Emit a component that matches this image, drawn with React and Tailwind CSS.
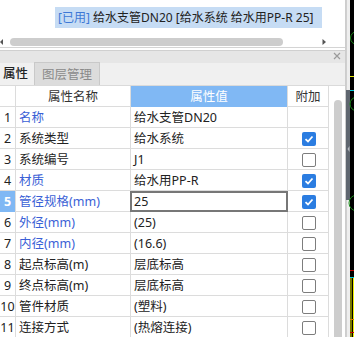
import React from "react";

const rows = [
    { n: 1, name: "名称", value: "给水支管DN20", blue: true, check: null },
    { n: 2, name: "系统类型", value: "给水系统", check: true },
    { n: 3, name: "系统编号", value: "J1", check: false },
    { n: 4, name: "材质", value: "给水用PP-R", blue: true, check: true },
    { n: 5, name: "管径规格(mm)", value: "25", blue: true, check: true, selected: true },
    { n: 6, name: "外径(mm)", value: "(25)", blue: true, check: false },
    { n: 7, name: "内径(mm)", value: "(16.6)", blue: true, check: false },
    { n: 8, name: "起点标高(m)", value: "层底标高", check: false },
    { n: 9, name: "终点标高(m)", value: "层底标高", check: false },
    { n: 10, name: "管件材质", value: "(塑料)", check: false },
    { n: 11, name: "连接方式", value: "(热熔连接)", check: false },
];

function CheckBox({ checked }) {
    if (checked) {
        return (
            <div className="w-[14px] h-[14px] rounded-[2px] bg-[#2b7de1] flex items-center justify-center">
                <svg width="10" height="10" viewBox="0 0 10 10">
                    <path d="M1.5 5.2 L4 7.5 L8.5 2.5" fill="none" stroke="#fff" strokeWidth="1.8" />
                </svg>
            </div>
        );
    }
    return <div className="w-[14px] h-[14px] rounded-[2px] border border-[#7d7d7d] bg-white" />;
}

function CanvasStrip() {
    return (
        <svg width="8" height="337" className="shrink-0 block">
            <rect x="0" y="0" width="4" height="337" fill="#eeeeee" />
            <rect x="0" y="0" width="1" height="337" fill="#cfcfcf" />
            <rect x="0" y="90" width="4" height="110" fill="#5f666f" />
            <path d="M3.5 146 L1.5 149 L3.5 152 Z" fill="#b8bcc2" />
            <rect x="4" y="0" width="4" height="337" fill="#000" />
            <circle cx="11" cy="38" r="6.5" fill="none" stroke="#1a8a1a" strokeWidth="1" />
            <circle cx="11" cy="104" r="7" fill="none" stroke="#1a8a1a" strokeWidth="1" />
            <circle cx="11" cy="203" r="8" fill="none" stroke="#1a8a1a" strokeWidth="1" />
            <rect x="4" y="76" width="4" height="1" fill="#e8e800" />
            <rect x="4" y="90" width="4" height="1" fill="#00c8d8" />
            <rect x="4" y="270" width="4" height="1" fill="#c00000" />
            <rect x="4" y="277" width="4" height="1" fill="#00c8d8" />
            <rect x="4.5" y="278" width="1" height="59" fill="#f0f000" />
            <rect x="7" y="278" width="1" height="59" fill="#f0f000" />
            <rect x="4" y="319" width="4" height="1" fill="#d08000" />
            <rect x="4" y="332" width="4" height="1" fill="#c00000" />
        </svg>
    );
}

export default function App() {
    return (
        <div
            className="w-[354px] h-[337px] overflow-hidden flex bg-white text-[12.5px] text-[#333]"
            style={{ fontFamily: '"Noto Sans", "Noto Sans CJK SC", sans-serif' }}
        >
            <div className="w-[346px] shrink-0 flex flex-col border-r border-[#cdcdcd]">
                {/* top list panel */}
                <div className="h-[50px] border-b border-[#d4d4d4] flex flex-col">
                    <div className="pl-[55px] pt-[7px]">
                        <span className="inline-block h-[21px] leading-[21px] w-[267px] pl-[3px] bg-[#c6dcf4] whitespace-nowrap text-[12px] text-[#222]">
                            <span className="text-[#3d78d6]">[已用]</span> 给水支管DN20 [给水系统 给水用PP-R 25]
                        </span>
                    </div>
                    <div className="flex items-center h-[10px] mt-[9px]">
                        <svg width="4" height="8" className="shrink-0">
                            <path d="M3 1 L0 4 L3 7 Z" fill="#555" />
                        </svg>
                        <div className="ml-[6px] w-[273px] h-[8px] rounded-full bg-[#cdcdcd]" />
                        <svg width="5" height="8" className="ml-[39px] shrink-0">
                            <path d="M0.5 1 L4 4 L0.5 7 Z" fill="#555" />
                        </svg>
                    </div>
                </div>
                {/* dock panel */}
                <div className="mt-[2px] flex-1 flex flex-col border-t border-[#d0d0d0]">
                    <div className="h-[12px] bg-[#e6e6e6] flex justify-end items-start pr-[4px]">
                        <svg width="8" height="8" className="mt-[1px]">
                            <path d="M1 1 L7 7 M7 1 L1 7" stroke="#9a9a9a" strokeWidth="1.2" />
                        </svg>
                    </div>
                    <div className="h-[23px] bg-[#f0f0f0] flex items-end border-b border-[#dadada]">
                        <div className="h-[23px] w-[34px] pl-[3px] leading-[24px] text-[#222] font-medium">属性</div>
                        <div className="h-[23px] w-[66px] bg-[#dcdcdc] border border-[#c9c9c9] border-b-0 text-center leading-[23px] text-[#8a8a8a]">
                            图层管理
                        </div>
                    </div>
                    <div className="flex flex-1">
                        <div className="w-[329px] shrink-0">
                            <div className="grid grid-cols-[16px_115px_157px_41px] h-[21px] border-b border-[#dcdcdc]">
                                <div className="border-r border-[#dcdcdc]" />
                                <div className="border-r border-[#dcdcdc] text-center leading-[21px]">属性名称</div>
                                <div className="border-r border-[#dcdcdc] bg-[#80b8f4] text-white text-center leading-[21px]">属性值</div>
                                <div className="border-r border-[#dcdcdc] text-center leading-[21px]">附加</div>
                            </div>
                            {rows.map((r) => (
                                <div key={r.n} className="grid grid-cols-[16px_115px_157px_41px] h-[21px] border-b border-[#dcdcdc]">
                                    <div
                                        className={
                                            r.selected
                                                ? "border-r border-[#dcdcdc] bg-[#80b8f4] text-white font-bold text-center leading-[21px]"
                                                : "border-r border-[#dcdcdc] text-center leading-[21px] text-[#222]"
                                        }
                                    >
                                        {r.n}
                                    </div>
                                    <div
                                        className={
                                            r.blue
                                                ? "border-r border-[#dcdcdc] pl-[3px] leading-[21px] whitespace-nowrap text-[#3a5fd6]"
                                                : "border-r border-[#dcdcdc] pl-[3px] leading-[21px] whitespace-nowrap text-[#222]"
                                        }
                                    >
                                        {r.name}
                                    </div>
                                    {r.selected ? (
                                        <div className="border-2 border-[#777] -ml-[1px] pl-[2px] leading-[17px] text-[#222] bg-white">
                                            {r.value}
                                        </div>
                                    ) : (
                                        <div className="border-r border-[#dcdcdc] pl-[3px] leading-[21px] whitespace-nowrap overflow-hidden text-[#222]">
                                            {r.value}
                                        </div>
                                    )}
                                    <div className="border-r border-[#dcdcdc] flex items-center justify-center pl-[1px]">
                                        {r.check !== null && <CheckBox checked={r.check} />}
                                    </div>
                                </div>
                            ))}
                        </div>
                        <div className="flex-1 pl-[5px] pt-[14px]">
                            <div className="w-[8px] h-full rounded-t-full bg-[#cdcdcd]" />
                        </div>
                    </div>
                </div>
            </div>
            <CanvasStrip />
        </div>
    );
}
